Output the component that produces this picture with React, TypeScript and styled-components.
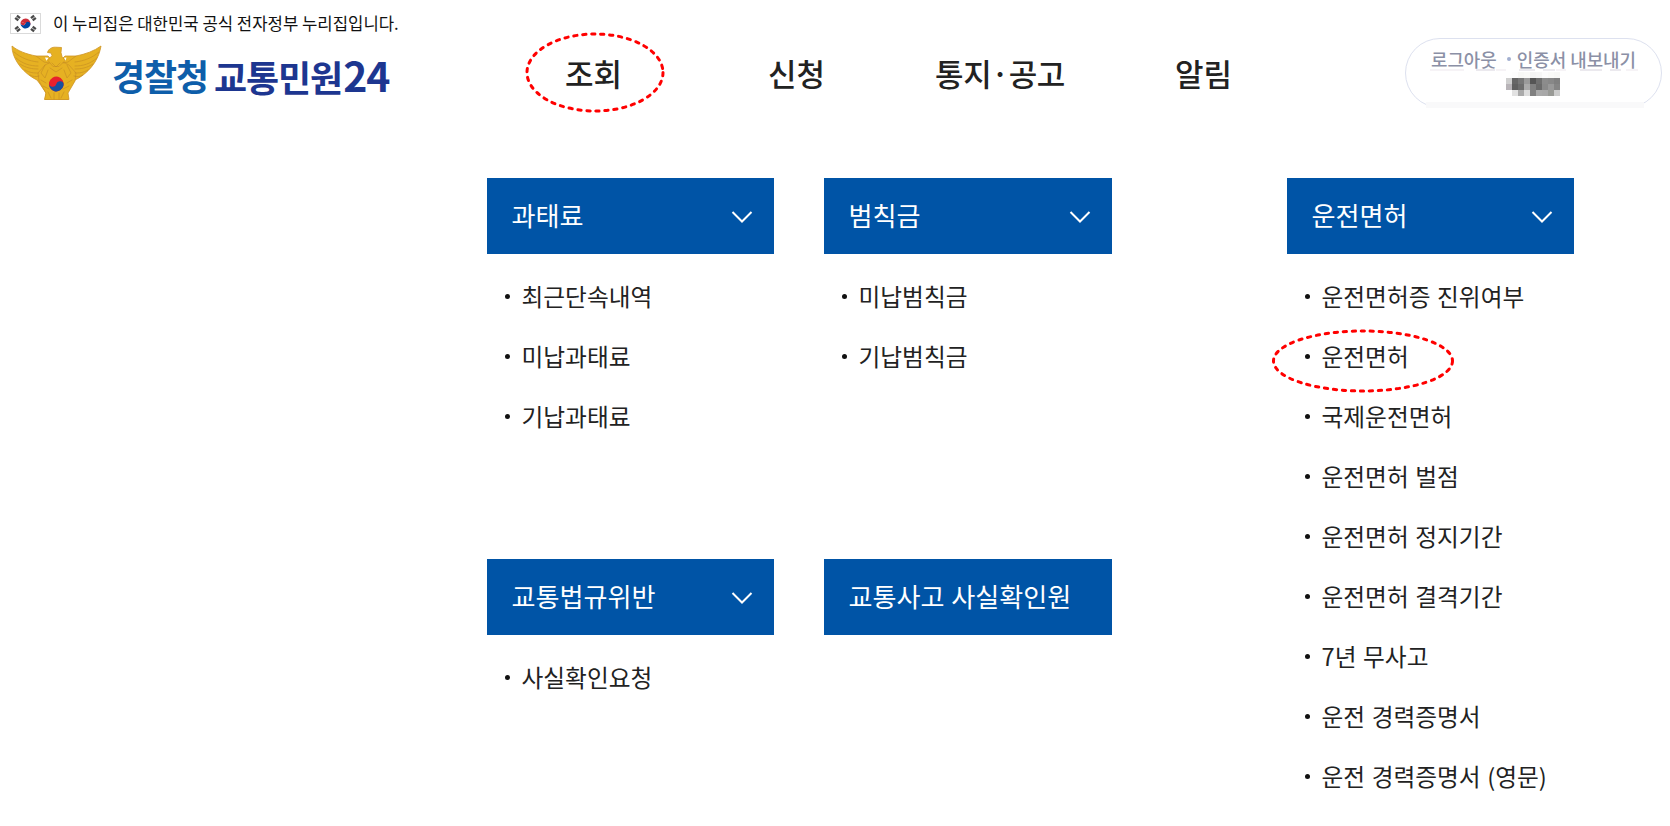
import React from 'react'
import styled, { createGlobalStyle } from 'styled-components'

const GlobalStyle = createGlobalStyle`
  * {
    box-sizing: border-box;
  }

  body {
    margin: 0;
    background-color: #ffffff;
    font-family: 'Noto Sans CJK KR', 'Noto Sans', sans-serif;
    color: #222222;
  }

  ul {
    list-style: none;
    margin: 0;
    padding: 0;
  }
`

const Page = styled.div`
  width: 1670px;
  height: 826px;
  overflow: hidden;
`

const Header = styled.header`
  display: flex;
  height: 178px;
`

const Brand = styled.div`
  width: 487px;
  padding: 13px 0 0 10px;
`

const GovNotice = styled.div`
  display: flex;
  align-items: center;
  gap: 12px;
  height: 21px;
  font-size: 16.7px;
  line-height: 21px;
  color: #111111;
  white-space: nowrap;
`

const FlagBox = styled.svg`
  flex: none;
  width: 31px;
  height: 21px;
`

const Logo = styled.div`
  display: flex;
  margin-top: 11px;
  gap: 10px;
  height: 56px;
`

const EagleSvg = styled.svg`
  flex: none;
  width: 92px;
  height: 56px;
`

const LogoText = styled.div`
  display: flex;
  gap: 6px;
  padding-top: 9px;
  font-size: 36px;
  font-weight: 700;
  line-height: 42px;
  letter-spacing: -1.1px;
  white-space: nowrap;
`

const LogoWord = styled.span<{ $color: string }>`
  color: ${({ $color }) => $color};
`

const LogoNumber = styled.span`
  margin-left: 1px;
  font-size: 41px;
  line-height: 1;
`

const Nav = styled.nav`
  display: flex;
  gap: 110px;
  width: 918px;
  padding: 51px 0 0 78px;
  font-size: 31px;
  font-weight: 500;
  line-height: 44px;
  white-space: nowrap;
`

const NavItem = styled.div`
  position: relative;

  &:first-child {
    margin-right: 36px;
  }

  &:nth-child(3) {
    letter-spacing: -0.4px;
  }
`

const Marker = styled.svg<{ $left: number; $top: number }>`
  position: absolute;
  left: ${({ $left }) => $left}px;
  top: ${({ $top }) => $top}px;
  overflow: visible;
  pointer-events: none;
`

const UserBox = styled.div`
  position: relative;
  width: 257px;
  height: 70px;
  margin-top: 38px;
  padding-top: 8px;
  border: 1px solid #dde1ef;
  border-radius: 35px;
`

const UserLinks = styled.div`
  display: flex;
  justify-content: center;
  align-items: center;
  height: 24px;
  font-size: 17.9px;
  font-weight: 500;
  line-height: 24px;
  color: #8b90a6;
  white-space: nowrap;
`

const LinkDot = styled.i`
  width: 4px;
  height: 4px;
  margin: 0 6px 0 10px;
  border-radius: 50%;
  background-color: #a2afd0;
`

const UserName = styled.svg`
  display: block;
  width: 208px;
  height: 27px;
  margin: -2px 0 0 24px;
`

const BottomStrip = styled.div`
  position: absolute;
  left: 20px;
  top: 63px;
  width: 218px;
  height: 6px;
  background-color: #f9f9fa;
  box-shadow: 0 3px 0 #ffffff;
`

const Menu = styled.main`
  display: flex;
  align-items: flex-start;
  padding-left: 487px;
`

const MenuGrid = styled.div`
  display: grid;
  grid-template-columns: 287px 288px;
  grid-template-rows: 381px auto;
  column-gap: 50px;
  width: 800px;
`

const Section = styled.section`
  width: 100%;
`

const LicenseColumn = styled.div`
  width: 287px;
`

const SectionTitle = styled.h2`
  display: flex;
  justify-content: space-between;
  align-items: center;
  height: 76px;
  margin: 0 0 12px;
  padding: 0 21.5px 3px 24.5px;
  background-color: #0054a6;
  color: #ffffff;
  font-size: 26.1px;
  font-weight: 400;
  word-spacing: 0.8px;
  white-space: nowrap;

  svg {
    margin-top: 4px;
  }
`

const LinkItem = styled.li`
  position: relative;
  display: flex;
  align-items: center;
  gap: 11.5px;
  height: 60px;
  padding-left: 18px;
  font-size: 23.7px;
  word-spacing: 1.3px;
  white-space: nowrap;

  &::before {
    content: '';
    width: 5px;
    height: 5px;
    margin-top: 1px;
    border-radius: 50%;
    background-color: #111111;
  }
`

interface MenuSection {
  title: string
  links: string[]
}

const NAV_ITEMS = ['조회', '신청', '통지·공고', '알림']

const SECTIONS: MenuSection[] = [
  { title: '과태료', links: ['최근단속내역', '미납과태료', '기납과태료'] },
  { title: '범칙금', links: ['미납범칙금', '기납범칙금'] },
  { title: '교통법규위반', links: ['사실확인요청'] },
  { title: '교통사고 사실확인원', links: [] },
]

const LICENSE: MenuSection = {
  title: '운전면허',
  links: [
    '운전면허증 진위여부',
    '운전면허',
    '국제운전면허',
    '운전면허 벌점',
    '운전면허 정지기간',
    '운전면허 결격기간',
    '7년 무사고',
    '운전 경력증명서',
    '운전 경력증명서 (영문)',
  ],
}

const MOSAIC = [
  ['#ffffff', '#fdfdfd', '#f8f8f6', '#fafaf8', '#f4f4f4', '#f6f6f6', '#fcfcfc', '#fafaf8', '#f8f8f6'],
  ['#cfcfcf', '#666666', '#777777', '#9a9a9a', '#555555', '#6f6f6f', '#8c8c8c', '#888888', '#808080'],
  ['#b8b4b8', '#606060', '#6d6d6d', '#aaaaaa', '#808080', '#6a6a6a', '#8a8a8a', '#999999', '#858585'],
  ['#ffffff', '#e2e2e2', '#aaaaaa', '#dddddd', '#808080', '#aaaaaa', '#a8a8a8', '#999a96', '#cccccc'],
]

const Flag = () => (
  <FlagBox viewBox="0 0 31 21">
    <rect x="0.5" y="0.5" width="30" height="20" fill="#fff" stroke="#dadada" />
    <g transform="rotate(20 15.5 10.5)">
      <path d="M10.5 10.5a5 5 0 0 1 10 0z" fill="#cd2e3a" />
      <path d="M10.5 10.5a5 5 0 0 0 10 0a2.5 2.5 0 0 0-5 0a2.5 2.5 0 0 1-5 0z" fill="#0047a0" />
      <path d="M10.5 10.5a2.5 2.5 0 0 0 5 0z" fill="#cd2e3a" />
    </g>
    <path
      d="M6 7l3.2-4M21.8 3l3.2 4M6 14l3.2 4M21.8 18l3.2-4"
      stroke="#4a4a4a"
      strokeWidth="4"
      strokeDasharray="2.4 0.4"
    />
  </FlagBox>
)

const Eagle = () => (
  <EagleSvg viewBox="0 0 92 56">
    <g fill="#e6b122" stroke="#cf9526" strokeWidth="0.8" strokeLinejoin="round">
      <path d="M2 1c6 5 14 8 24 10h12l4 4h9l4-4h11c10-2 18-5 25-10-1 6-3 11-6 16-5 8-12 14-20 18l-3 4-5 9 1 6.500H35l1-6.500-6-9-3-4C19 31 12 25 7 17 4 12 2 7 2 1z" />
      <path d="M28 28l7-8 6-3h12l6 3 7 8-1 8-7 12 1 6.500H34.500L36 48l-7-12z" />
      <path d="M37.500 7.500c1-4 5-5.500 8-5.300l6 .3-.5 5 1 4 3 4-6 6h-6l-5-6 4-5-1-2.500z" />
    </g>
    <g fill="none" stroke="#bd8422" strokeWidth="0.8" strokeLinecap="round" opacity="0.6">
      <path d="M4 7c7 6 15 9 24 10M6 13c7 6 14 8 22 8M10 19c6 4 12 5 18 5M15 25c5 3 9 3 13 3M20 30c3 2 6 2 9 1" />
      <path d="M89 7c-7 6-15 9-24 10M87 13c-7 6-14 8-22 8M83 19c-6 4-12 5-18 5M78 25c-5 3-9 3-13 3M73 30c-3 2-6 2-9 1" />
      <path d="M26 11l8 6 5 1M66 11l-8 6-5 1M35 20l-4 8 4 5 3-8M57 20l4 8-4 5-3-8M42 18l4 4 4-4M40 23l6 4 6-4" />
      <path d="M31 35l5 3M62 35l-5 3M33 41l6 3M59 41l-6 3M38 47l3 6M54 47l-3 6M44 48v6M49 48v6" />
    </g>
    <path d="M35 12.500l3.500.3-2 3zM56.500 12.500l-2.500.3 1.500 3z" fill="#fff" />
    <g transform="rotate(14 46.300 39)">
      <circle cx="46.300" cy="39" r="7.400" fill="#e8202c" />
      <path d="M38.900 39a7.400 7.400 0 0 0 14.800 0a3.700 3.700 0 0 0-7.400 0a3.700 3.700 0 0 1-7.400 0z" fill="#17509f" />
    </g>
  </EagleSvg>
)

const Chevron = () => (
  <svg width="22" height="14" viewBox="0 0 22 14" fill="none">
    <path d="M1.5 2L11 11.5L20.5 2" stroke="#fff" strokeWidth="2" />
  </svg>
)

const MenuBlock = ({ title, links }: MenuSection) => (
  <Section>
    <SectionTitle>
      {title}
      {links.length > 0 && <Chevron />}
    </SectionTitle>
    <ul>
      {links.map((link) => (
        <LinkItem key={link}>
          {link}
          {link === '운전면허' && (
            <Marker $left={-13} $top={4} width="180" height="62">
              <ellipse
                cx="89"
                cy="31"
                rx="89.5"
                ry="30"
                fill="none"
                stroke="#f00"
                strokeWidth="3"
                strokeDasharray="3.3 5.7"
                strokeLinecap="round"
              />
            </Marker>
          )}
        </LinkItem>
      ))}
    </ul>
  </Section>
)

const App = () => (
  <Page>
    <GlobalStyle />
    <Header>
      <Brand>
        <GovNotice>
          <Flag />
          이 누리집은 대한민국 공식 전자정부 누리집입니다.
        </GovNotice>
        <Logo>
          <Eagle />
          <LogoText>
            <LogoWord $color="#0e5eaa">경찰청</LogoWord>
            <LogoWord $color="#1d3690">
              교통민원<LogoNumber>24</LogoNumber>
            </LogoWord>
          </LogoText>
        </Logo>
      </Brand>
      <Nav>
        {NAV_ITEMS.map((item, index) => (
          <NavItem key={item}>
            {item}
            {index === 0 && (
              <Marker $left={-38} $top={-17} width="138" height="78">
                <ellipse
                  cx="68"
                  cy="38.5"
                  rx="68"
                  ry="38.5"
                  fill="none"
                  stroke="#f00"
                  strokeWidth="3"
                  strokeDasharray="3.3 5.7"
                  strokeLinecap="round"
                />
              </Marker>
            )}
          </NavItem>
        ))}
      </Nav>
      <UserBox>
        <UserLinks>
          <span>로그아웃</span>
          <LinkDot />
          <span>인증서 내보내기</span>
        </UserLinks>
        <UserName viewBox="0 0 208 27" shapeRendering="crispEdges">
          <path d="M0 1h34M66 1h10M126 1h10M196 1h12" stroke="#f6f3f6" strokeWidth="2" />
          <path d="M46 1h19M89 1h16M113 1h12M150 1h22M180 1h11" stroke="#ebe9ee" strokeWidth="2" />
          {MOSAIC.map((row, y) =>
            row.map((fill, x) => (
              <rect key={`${x}-${y}`} x={76 + x * 6} y={3 + y * 6} width="6" height="6" fill={fill} />
            )),
          )}
        </UserName>
        <BottomStrip />
      </UserBox>
    </Header>
    <Menu>
      <MenuGrid>
        {SECTIONS.map((section) => (
          <MenuBlock key={section.title} {...section} />
        ))}
      </MenuGrid>
      <LicenseColumn>
        <MenuBlock {...LICENSE} />
      </LicenseColumn>
    </Menu>
  </Page>
)

export default App
